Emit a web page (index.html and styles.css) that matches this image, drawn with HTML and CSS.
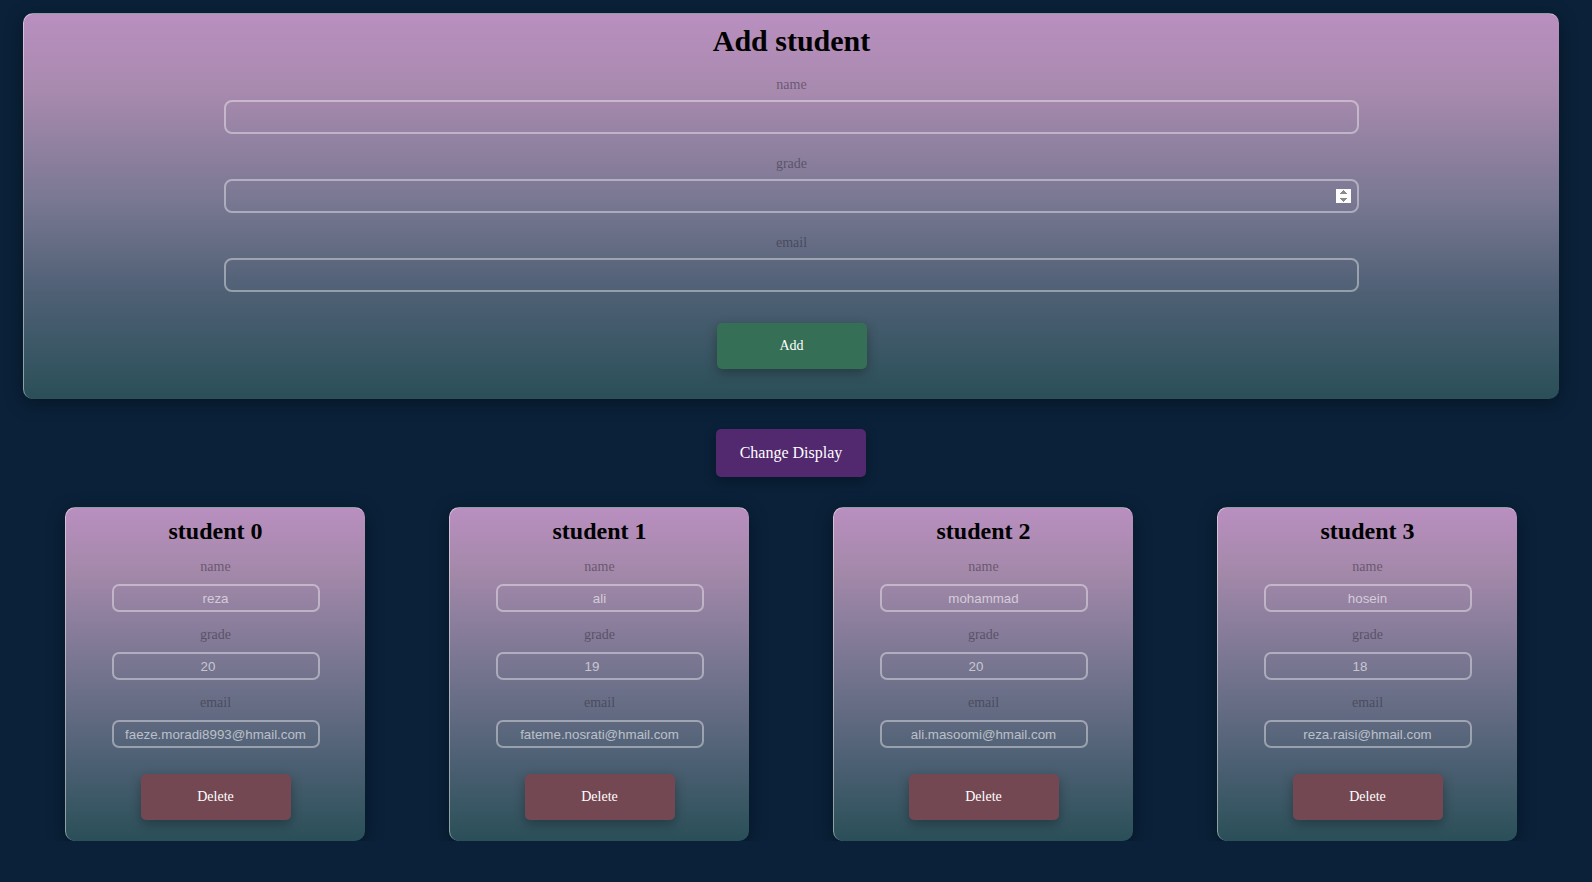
FILE: index.html
```html
<!DOCTYPE html>
<html lang="en">
<head>
<meta charset="utf-8">
<title>Students</title>
<link rel="stylesheet" href="styles.css">
</head>
<body>
<div class="page">
  <form class="add-form">
    <h1 class="add-title">Add student</h1>
    <label class="field-label">name</label>
    <input class="field-input" type="text">
    <label class="field-label">grade</label>
    <input class="field-input field-number" type="number">
    <label class="field-label">email</label>
    <input class="field-input" type="email">
    <button type="button" class="btn btn-add">Add</button>
  </form>

  <div class="toolbar">
    <button type="button" class="btn btn-display">Change Display</button>
  </div>

  <div class="cards">
    <div class="card">
      <h2 class="card-title">student 0</h2>
      <label class="card-label">name</label>
      <input class="card-input" type="text" value="reza">
      <label class="card-label">grade</label>
      <input class="card-input" type="number" value="20">
      <label class="card-label">email</label>
      <input class="card-input" type="email" value="faeze.moradi8993@hmail.com">
      <button type="button" class="btn btn-delete">Delete</button>
    </div>
    <div class="card">
      <h2 class="card-title">student 1</h2>
      <label class="card-label">name</label>
      <input class="card-input" type="text" value="ali">
      <label class="card-label">grade</label>
      <input class="card-input" type="number" value="19">
      <label class="card-label">email</label>
      <input class="card-input" type="email" value="fateme.nosrati@hmail.com">
      <button type="button" class="btn btn-delete">Delete</button>
    </div>
    <div class="card">
      <h2 class="card-title">student 2</h2>
      <label class="card-label">name</label>
      <input class="card-input" type="text" value="mohammad">
      <label class="card-label">grade</label>
      <input class="card-input" type="number" value="20">
      <label class="card-label">email</label>
      <input class="card-input" type="email" value="ali.masoomi@hmail.com">
      <button type="button" class="btn btn-delete">Delete</button>
    </div>
    <div class="card">
      <h2 class="card-title">student 3</h2>
      <label class="card-label">name</label>
      <input class="card-input" type="text" value="hosein">
      <label class="card-label">grade</label>
      <input class="card-input" type="number" value="18">
      <label class="card-label">email</label>
      <input class="card-input" type="email" value="reza.raisi@hmail.com">
      <button type="button" class="btn btn-delete">Delete</button>
    </div>
  </div>
</div>
</body>
</html>
```

FILE: styles.css
```css
* {
  box-sizing: border-box;
}

html, body {
  margin: 0;
  padding: 0;
}

body {
  background: #0a2139;
  font-family: "Liberation Serif", "Times New Roman", serif;
}

.page {
  width: 1592px;
  padding: 13px 33px 0 23px;
}

.add-form {
  display: flex;
  flex-direction: column;
  align-items: center;
  padding: 9px 0 30px;
  border-radius: 10px;
  border-top: 1px solid rgba(255, 255, 255, 0.45);
  border-left: 1px solid rgba(255, 255, 255, 0.45);
  background: linear-gradient(to bottom, #b98fc0 0%, #a88aae 20%, #7a7893 48%, #4f6075 72%, #2a4f58 100%);
  box-shadow: 0 4px 18px rgba(0, 0, 0, 0.35);
}

.add-title {
  margin: 0;
  font-size: 30px;
  line-height: 35px;
  font-weight: bold;
  color: #000;
}

.field-label {
  display: block;
  margin-top: 22px;
  margin-bottom: 7px;
  font-size: 14px;
  line-height: 16px;
  color: rgba(50, 45, 60, 0.55);
}

.add-title + .field-label {
  margin-top: 19px;
}

.field-input {
  display: block;
  width: 74%;
  height: 34px;
  border: 2px solid rgba(255, 255, 255, 0.4);
  border-radius: 8px;
  background: transparent;
  padding: 1px 6px;
  font-family: "Liberation Sans", Arial, sans-serif;
  font-size: 13.33px;
  color: rgba(255, 255, 255, 0.6);
  outline: none;
}

.field-number::-webkit-inner-spin-button {
  opacity: 1;
}

.btn {
  display: block;
  width: 150px;
  height: 46px;
  border: none;
  border-radius: 5px;
  font-family: "Liberation Serif", "Times New Roman", serif;
  font-size: 14px;
  color: #fff;
  box-shadow: 0 4px 12px rgba(0, 0, 0, 0.3);
  cursor: pointer;
}

.btn-add {
  margin-top: 31px;
  background: #356f55;
}

.toolbar {
  display: flex;
  justify-content: center;
  padding-top: 30px;
}

.btn-display {
  height: 48px;
  background: #52286f;
  font-size: 16px;
}

.cards {
  display: flex;
  justify-content: space-around;
  padding-top: 30px;
}

.card {
  display: flex;
  flex-direction: column;
  align-items: center;
  width: 300px;
  height: 334px;
  padding-top: 9px;
  border-radius: 10px;
  border-top: 1px solid rgba(255, 255, 255, 0.45);
  border-left: 1px solid rgba(255, 255, 255, 0.45);
  background: linear-gradient(to bottom, #b98fc0 0%, #a589ab 18%, #7b7793 45%, #536378 72%, #2a4f58 100%);
  box-shadow: 0 4px 18px rgba(0, 0, 0, 0.35);
}

.card-title {
  margin: 0;
  font-size: 24px;
  line-height: 28px;
  font-weight: bold;
  color: #000;
}

.card-label {
  display: block;
  margin-top: 15px;
  margin-bottom: 9px;
  font-size: 14px;
  line-height: 16px;
  color: rgba(50, 45, 60, 0.55);
}

.card-title + .card-label {
  margin-top: 14px;
}

.card-input {
  display: block;
  width: 208px;
  height: 28px;
  border: 2px solid rgba(255, 255, 255, 0.4);
  border-radius: 7px;
  background: transparent;
  padding: 1px 2px;
  text-align: center;
  font-family: "Liberation Sans", Arial, sans-serif;
  font-size: 13.33px;
  color: rgba(255, 255, 255, 0.6);
  outline: none;
}

.btn-delete {
  margin-top: 26px;
  background: #744852;
}
```
